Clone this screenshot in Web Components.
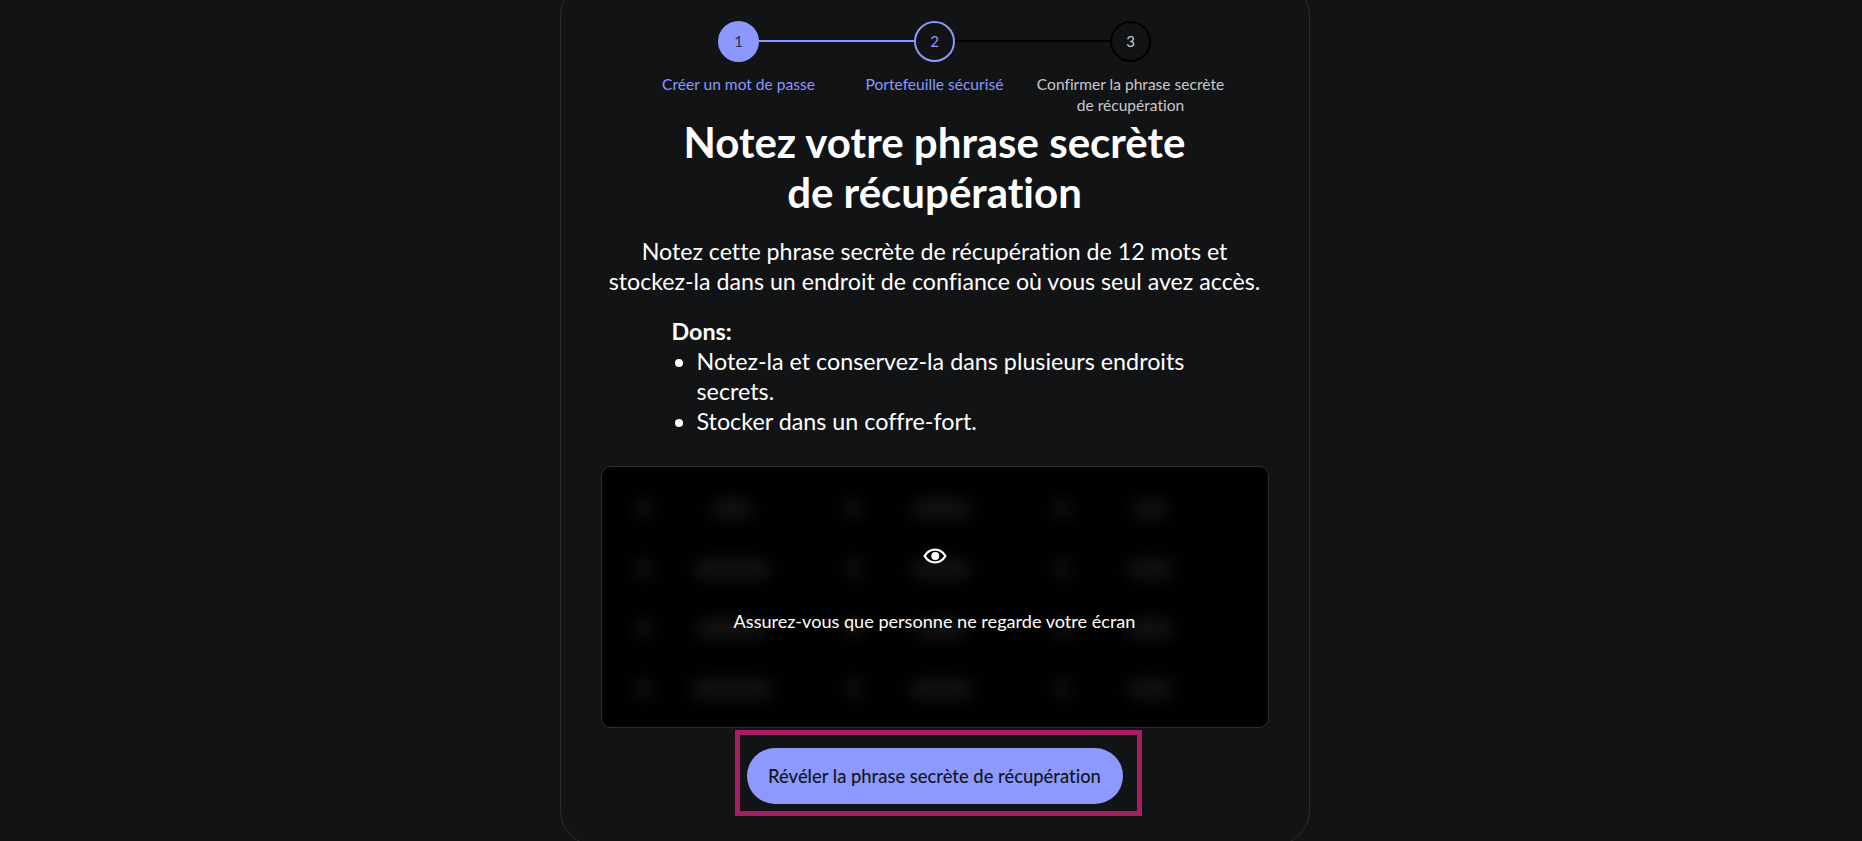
<!DOCTYPE html>
<html lang="fr"><head><meta charset="utf-8">
<style>
html,body{margin:0;padding:0;height:841px;overflow:hidden;background:#111315;font-family:Lato,"Noto Sans",sans-serif;color:#fff;font-variant-ligatures:none}
body{display:flex;justify-content:center;padding-left:7px;box-sizing:border-box}
</style></head><body>
<template id="t-step"><style>
:host{display:flex;flex-direction:column;align-items:center;width:196px;position:relative;font-size:15.55px;line-height:21px;text-align:center;color:var(--c,#c8c9cc)}
.c{width:41px;height:41px;box-sizing:border-box;border-radius:50%;border:2px solid var(--b,#000);display:flex;align-items:center;justify-content:center;background:var(--f,transparent);color:var(--n,#c8c9cc);font-size:15px;z-index:1;margin-bottom:12.5px}
.l{width:200px;display:block}
.bar{position:absolute;top:19.5px;left:118px;width:156px;height:2px;background:var(--line,transparent)}
</style><span class="bar"></span><span class="c"><slot name="n"></slot></span><span class="l"><slot></slot></span></template>
<template id="t-stepper"><style>:host{display:flex;justify-content:center;width:588px}</style><slot></slot></template>
<template id="t-card"><style>
:host{display:flex;flex-direction:column;align-items:center;box-sizing:border-box;width:750px;height:866px;margin:-20px 0 0;padding:39.5px 0 0;border:1px solid #2b2d30;border-radius:36px;flex:none}
</style><slot></slot></template>
<template id="t-title"><style>:host{display:block;font-size:42px;line-height:50px;font-weight:700;text-align:center;margin-top:0.5px}</style><slot></slot></template>
<template id="t-body"><style>:host{display:block;font-size:23.2px;line-height:30px;text-align:center;margin-top:19px;width:680px}</style><slot></slot></template>
<template id="t-tips"><style>
:host{display:block;font-size:23.3px;line-height:30px;width:526px;margin-top:21.5px}
b{font-weight:700;display:block;line-height:29px}
ul{margin:0;padding:0 0 0 25px}
</style><b><slot name="h"></slot></b><ul><slot></slot></ul></template>
<template id="t-li"><style>:host{display:list-item}</style><slot></slot></template>
<template id="t-reveal"><style>
:host{display:block;position:relative;box-sizing:border-box;width:668px;height:262px;margin-top:30px;background:#000;border:1px solid #2b2d30;border-radius:10px;overflow:hidden}
.g{display:grid;grid-template-columns:repeat(3,84px 92px 33.5px);grid-template-rows:repeat(4,60px);padding:11.5px 0 0 0;filter:blur(9px);justify-content:start}
.g i{display:block;height:14px;background:#1b1b1b;border-radius:4px;align-self:center;justify-self:center}
.g i.n{width:13px;height:17px}
.ov{position:absolute;inset:0;display:flex;flex-direction:column;align-items:center;color:#fff;font-size:18.1px;line-height:24px}
svg{display:block;margin-top:77px;margin-bottom:40.8px}
</style>
<div class="g" id="g"></div>
<div class="ov"><svg width="24" height="24" viewBox="0 0 24 24"><path d="M1.6 12C4 7.9 7.8 5.6 12 5.6s8 2.3 10.4 6.4C20 16.1 16.2 18.4 12 18.4S4 16.1 1.6 12Z" fill="none" stroke="#fff" stroke-width="2.3"/><circle cx="12.3" cy="12" r="4" fill="#fff"/></svg><slot></slot></div></template>
<template id="t-btn"><style>
:host{display:block;position:relative;margin-top:20px}
button{display:block;width:376px;height:56px;border:0;border-radius:28px;background:#8d99ff;color:#141618;font:500 18.4px/24px Lato,"Noto Sans",sans-serif;font-variant-ligatures:none;padding:0}
.mark{position:absolute;left:-12px;top:-18px;width:407px;height:86px;box-sizing:border-box;border:5px solid #a91e63;pointer-events:none}
</style><button><slot></slot></button><span class="mark"></span></template>

<mm-card>
<mm-stepper>
<mm-step style="--c:#8b99ff;--f:#8b99ff;--b:#8b99ff;--n:#2a2d45;--line:#8b99ff"><span slot="n">1</span>Créer un mot de passe</mm-step>
<mm-step style="--c:#8b99ff;--b:#8b99ff;--n:#8b99ff;--line:#000"><span slot="n">2</span>Portefeuille sécurisé</mm-step>
<mm-step><span slot="n">3</span>Confirmer la phrase secrète de récupération</mm-step>
</mm-stepper>
<mm-title>Notez votre phrase secrète<br>de récupération</mm-title>
<mm-body>Notez cette phrase secrète de récupération de 12 mots et<br>stockez-la dans un endroit de confiance où vous seul avez accès.</mm-body>
<mm-tips><span slot="h">Dons:</span><mm-li>Notez-la et conservez-la dans plusieurs endroits secrets.</mm-li><mm-li>Stocker dans un coffre-fort.</mm-li></mm-tips>
<mm-reveal>Assurez-vous que personne ne regarde votre écran</mm-reveal>
<mm-btn>Révéler la phrase secrète de récupération</mm-btn>
</mm-card>
<script>
function def(tag,tid,init){customElements.define(tag,class extends HTMLElement{constructor(){super();const r=this.attachShadow({mode:'open'});r.appendChild(document.getElementById(tid).content.cloneNode(true));if(init)init(r)}})}
def('mm-step','t-step');def('mm-stepper','t-stepper');def('mm-card','t-card');def('mm-title','t-title');def('mm-body','t-body');def('mm-tips','t-tips');def('mm-li','t-li');def('mm-btn','t-btn');
def('mm-reveal','t-reveal',r=>{const g=r.getElementById('g');
const widths=[[40,58,33],[76,58,45],[67,45,45],[80,62,45]];
for(const row of widths)for(const w of row){const n=document.createElement('i');n.className='n';g.appendChild(n);const e=document.createElement('i');e.style.width=w+'px';g.appendChild(e);g.appendChild(document.createElement('span'))}
});
</script>
</body></html>
